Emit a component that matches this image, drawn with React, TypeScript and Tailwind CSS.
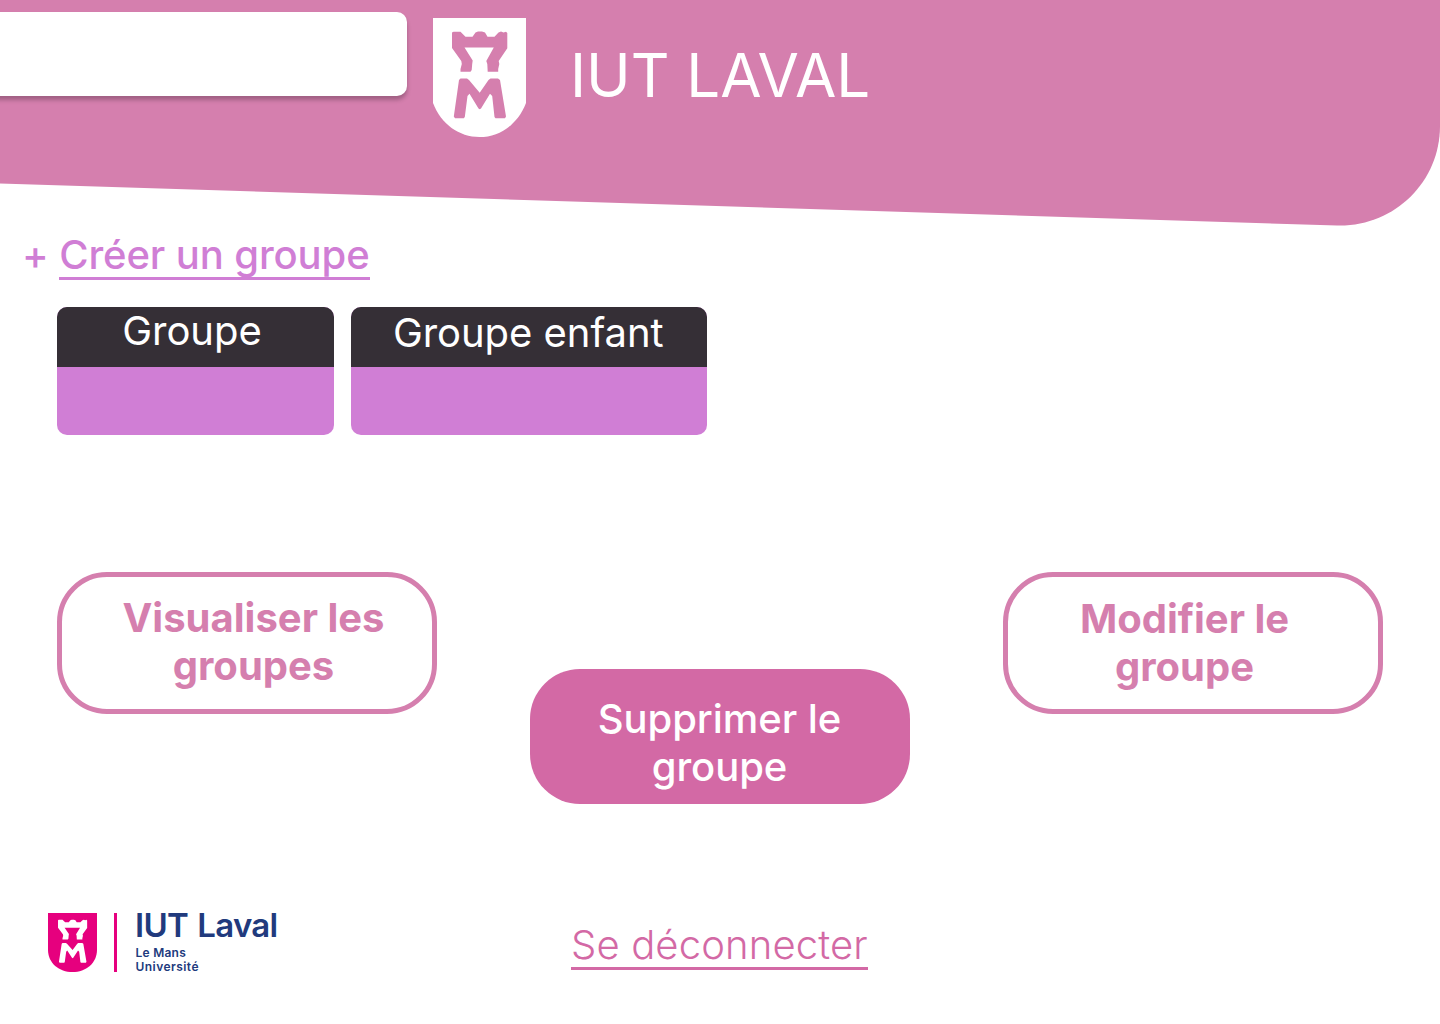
import React from "react";

type ShieldProps = { className: string; outline: string; bg: string; fg: string };

const HEADER_OUTLINE = "M0 0H93V85C85 106 67 119 46.500 119S8 106 0 85Z";
const FOOTER_OUTLINE = "M0 0H93V74C93 101 72 119 46.500 119S0 101 0 74Z";

function Shield({ className, outline, bg, fg }: ShieldProps) {
  return (
    <svg className={className} viewBox="0 0 93 119" preserveAspectRatio="none">
      <path fill={bg} d={outline} />
      <g fill={fg}>
        <path d="M19 14.500L20.500 13.700H27.500L32.500 18.700H39.500L42.500 14.500L45 13.500H49L52 14.500L54.500 18.700H61.500L65.500 14.500L68 13.500L70.500 14.500L73 13.700L74.300 15V30.300L65.700 43L66.300 46L65.200 51V53.700H54.700L54.300 46L53.300 43L60.800 29.500H31.500L39.700 42.500L39.200 46L38.700 52L37.500 53.700H27.500V51L28.800 46L28.300 43L19 30Z" />
        <path d="M26 62L27.500 60.500H34L36 62L46.700 74.700L55.500 62L57.500 60.500H65L67 62L73 98.500L72 100.300H62.500L61.500 99L59.200 78L57 75.800L48 90.500L46.700 91.300L45.500 90.500L36.500 75.800L34.500 78L31.800 99L30.800 100.300H22L20.800 98.500Z" />
      </g>
    </svg>
  );
}

function Column({ title, className, titleClass }: { title: string; className: string; titleClass: string }) {
  return (
    <section className={`h-32 overflow-hidden rounded-[10px] bg-[#d07ed5] text-center text-[40px] leading-[48px] text-white ${className}`}>
      <h2 className={`h-[60px] whitespace-nowrap bg-[#352f36] tracking-[-0.05px] ${titleClass}`}>{title}</h2>
    </section>
  );
}

export default function App() {
  return (
    <main className="flex h-[1024px] w-[1440px] flex-col overflow-hidden bg-white font-['Inter',sans-serif]">
      <header className="relative h-[226px] shrink-0">
        <svg className="absolute inset-0" width="1440" height="226" viewBox="0 0 1440 226">
          <path fill="#d57fae" d="M0 0H1440V126C1440 182 1394 227 1337 225.500L0 183.500Z" />
        </svg>
        <div className="relative flex pt-3">
          <div className="-ml-5 h-[84px] w-[427px] rounded-[10px] bg-white shadow-[0_4px_4px_rgba(0,0,0,0.25)]" />
          <Shield className="ml-[26px] mt-[6px] h-[119px] w-[93px]" outline={HEADER_OUTLINE} bg="#fff" fg="#d57fae" />
          <h1 className="ml-[44px] mt-[25px] whitespace-nowrap text-[60px] font-normal leading-[76px] text-white">IUT LAVAL</h1>
        </div>
      </header>

      <a className="ml-[22px] mt-[5px] flex h-12 shrink-0 whitespace-pre text-[40px] font-medium leading-[48px] tracking-[-0.1px] text-[#d07ed5] [font-feature-settings:'calt'_0]">
        <span>+ </span>
        <span className="h-[49px] shrink-0 border-b-[3px] border-[#d07ed5]">Créer un groupe</span>
      </a>

      <div className="ml-[57px] mt-7 flex shrink-0 gap-[17px]">
        <Column title="Groupe" className="w-[277px]" titleClass="pr-[7px]" />
        <Column title="Groupe enfant" className="w-[355.500px]" titleClass="pr-px pt-0.5" />
      </div>

      <div className="mx-[57px] mt-[137px] flex h-[232px] shrink-0 items-start justify-between text-center text-[40px] leading-[48px]">
        <button className="h-[142px] w-[380px] rounded-[50px] border-[5px] border-[#d57fae] pb-[3px] pl-[13px] font-bold text-[#d57fae]">
          Visualiser les
          <br />
          groupes
        </button>
        <button className="mt-[97px] h-[135px] w-[380px] rounded-[50px] bg-[#d369a5] pr-px pt-[12px] font-medium tracking-[-0.05px] text-white">
          Supprimer le
          <br />
          groupe
        </button>
        <button className="h-[142px] w-[380px] rounded-[50px] border-[5px] border-[#d57fae] pb-[1px] pr-[17px] font-bold text-[#d57fae]">
          Modifier le
          <br />
          groupe
        </button>
      </div>

      <footer className="mt-[109px] flex shrink-0 items-start pl-12">
        <Shield className="h-[59px] w-[49px]" outline={FOOTER_OUTLINE} bg="#e6007e" fg="#fff" />
        <div className="ml-[17px] h-[59px] w-[3px] bg-[#e6007e]" />
        <div className="ml-[17px] w-[200px] whitespace-nowrap text-[#213a7d]">
          <p className="-mt-1 h-[37px] text-[33px] font-semibold leading-[33px] tracking-[-0.7px] [word-spacing:1.500px] pl-px">IUT Laval</p>
          <p className="pl-[1.500px] text-[12px] font-semibold leading-[14px] tracking-[0.25px]">Le Mans</p>
          <p className="pl-[1.500px] text-[12px] font-semibold leading-[14px] tracking-[0.45px]">Université</p>
        </div>
        <a className="ml-[237px] mt-2 h-[49px] whitespace-nowrap border-b-[3px] border-[#d369a5] text-[40px] font-light leading-[48px] tracking-[0.14px] text-[#d369a5]">
          Se déconnecter
        </a>
      </footer>
    </main>
  );
}
